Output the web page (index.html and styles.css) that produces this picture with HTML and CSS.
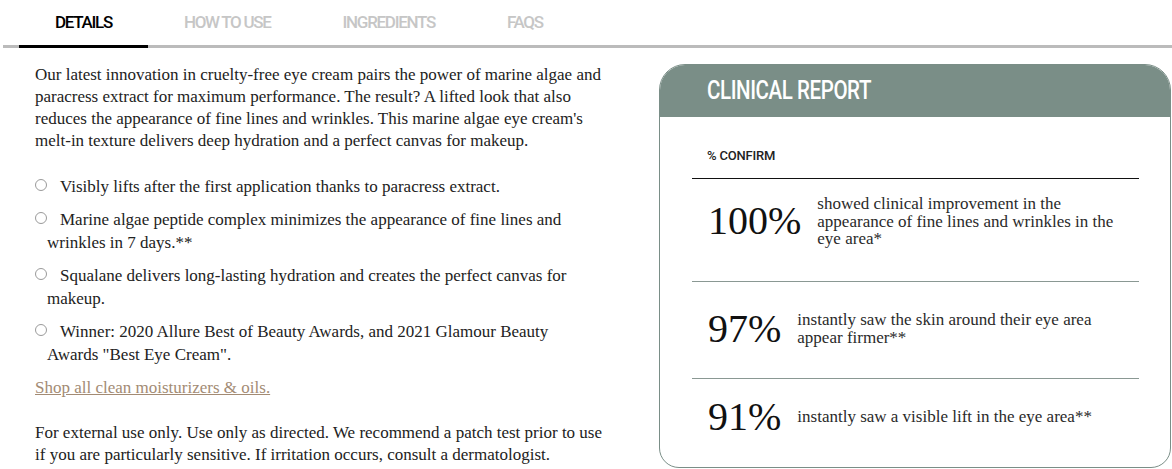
FILE: index.html
```html
<!DOCTYPE html>
<html lang="en">
<head>
    <meta charset="UTF-8">
    <title>Details</title>
    <link rel="stylesheet" href="styles.css">
</head>
<body>

    <div class="tabs">
        <span class="tab active">DETAILS</span>
        <span class="tab">HOW TO USE</span>
        <span class="tab">INGREDIENTS</span>
        <span class="tab">FAQS</span>
    </div>

    <div class="panel">

        <div class="details">
            <p class="intro">Our latest innovation in cruelty-free eye cream pairs the power of marine algae and paracress extract for maximum performance. The result? A lifted look that also reduces the appearance of fine lines and wrinkles. This marine algae eye cream's melt-in texture delivers deep hydration and a perfect canvas for makeup.</p>

            <ul class="points">
                <li>Visibly lifts after the first application thanks to paracress extract.</li>
                <li>Marine algae peptide complex minimizes the appearance of fine lines and wrinkles in 7 days.**</li>
                <li>Squalane delivers long-lasting hydration and creates the perfect canvas for makeup.</li>
                <li>Winner: 2020 Allure Best of Beauty Awards, and 2021 Glamour Beauty Awards "Best Eye Cream".</li>
            </ul>

            <a class="shop" href="#">Shop all clean moisturizers &amp; oils.</a>

            <p class="note">For external use only. Use only as directed. We recommend a patch test prior to use if you are particularly sensitive. If irritation occurs, consult a dermatologist.</p>
        </div>

        <div class="report">
            <div class="report-head"><span>CLINICAL REPORT</span></div>
            <div class="report-body">
                <div class="confirm">% CONFIRM</div>
                <div class="stat first">
                    <span class="num">100%</span>
                    <span class="desc">showed clinical improvement in the appearance of fine lines and wrinkles in the eye area*</span>
                </div>
                <div class="stat second">
                    <span class="num">97%</span>
                    <span class="desc">instantly saw the skin around their eye area appear firmer**</span>
                </div>
                <div class="stat third">
                    <span class="num">91%</span>
                    <span class="desc">instantly saw a visible lift in the eye area**</span>
                </div>
            </div>
        </div>

    </div>

</body>
</html>
```

FILE: styles.css
```css
* {
    margin: 0;
    padding: 0;
    box-sizing: border-box;
}

body {
    font-family: "Liberation Serif", "DejaVu Serif", serif;
    color: #222;
    background: #fff;
}

/* tab bar */
.tabs {
    display: flex;
    margin-left: 3px;
    padding-left: 16px;
    border-bottom: 3px solid #bbbbbb;
}

.tab {
    font-family: "Roboto", "DejaVu Sans Condensed", sans-serif;
    font-weight: 500;
    font-size: 17px;
    letter-spacing: -1.3px;
    line-height: 22px;
    color: #c6c6c6;
    padding: 11px 36px 12px;
    margin-bottom: -3px;
    border-bottom: 3px solid transparent;
}

.tab.active {
    color: #000;
    border-bottom-color: #000;
}

/* content */
.panel {
    display: flex;
    align-items: flex-start;
    padding: 16px 1px 0 35px;
}

.details {
    width: 576px;
    margin-right: 48px;
    font-size: 17px;
    line-height: 22px;
}

.intro {
    margin-bottom: 23px;
}

.points {
    list-style: none;
    padding-right: 10px;
}

.points li {
    padding-left: 12px;
    text-indent: -12px;
    margin-bottom: 10px;
    line-height: 23px;
}

.points li::before {
    content: "";
    display: inline-block;
    width: 10px;
    height: 10px;
    border: 1px solid #9a9a9a;
    border-radius: 50%;
    margin-right: 13px;
    vertical-align: 1px;
}

.shop {
    display: inline-block;
    color: #a38b74;
    text-decoration: underline;
    margin-top: 1px;
    margin-bottom: 23px;
}

.note {
    line-height: 22px;
}

/* clinical report card */
.report {
    width: 512px;
    border: 1px solid #7a8e87;
    border-radius: 26px 26px 20px 20px;
    overflow: hidden;
    height: 404px;
}

.report-head {
    background: #7a8e87;
    color: #fff;
    font-family: "Roboto", "DejaVu Sans Condensed", sans-serif;
    font-weight: 500;
    font-size: 25px;
    letter-spacing: -0.5px;
    line-height: 52px;
    padding-left: 47px;
}

.report-head span {
    display: inline-block;
    transform: scaleX(0.82);
    transform-origin: left center;
}

.report-body {
    padding: 0 31px 0 32px;
}

.confirm {
    font-family: "Roboto", "DejaVu Sans Condensed", sans-serif;
    font-weight: 500;
    font-size: 13px;
    letter-spacing: -0.2px;
    line-height: 16px;
    padding: 31px 0 14px 15px;
    border-bottom: 1px solid #111;
}

.stat {
    display: flex;
    align-items: center;
    padding-left: 16px;
    border-bottom: 1px solid #8a9893;
}

.stat.first {
    padding-top: 16px;
    padding-bottom: 33px;
}

.stat.second {
    padding-top: 23px;
    padding-bottom: 25px;
}

.stat.third {
    border-bottom: none;
    padding-top: 14px;
    padding-bottom: 20px;
}

.num {
    font-size: 40px;
    line-height: 48px;
    color: #111;
    margin-right: 16px;
    white-space: nowrap;
}

.desc {
    font-size: 17px;
    line-height: 17.5px;
    color: #2a2a2a;
    max-width: 310px;
}
```
